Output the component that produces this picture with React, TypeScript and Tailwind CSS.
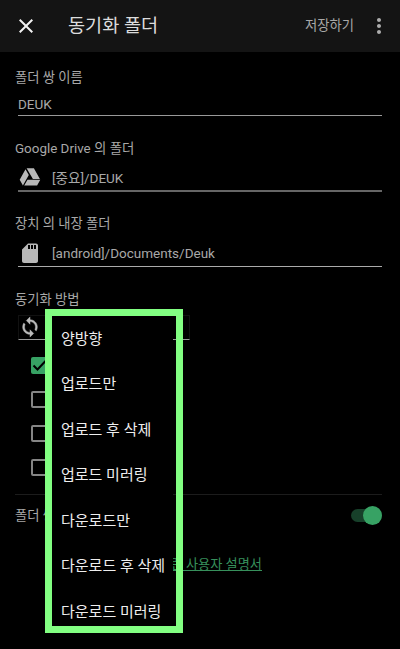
import React from 'react';

const menuItems = [
  '양방향',
  '업로드만',
  '업로드 후 삭제',
  '업로드 미러링',
  '다운로드만',
  '다운로드 후 삭제',
  '다운로드 미러링',
];

const CloseIcon = () => (
  <svg viewBox="0 0 24 24" className="size-[24px] fill-[#f2f2f2]">
    <path d="M19 6.41 17.59 5 12 10.59 6.41 5 5 6.41 10.59 12 5 17.59 6.41 19 12 13.41 17.59 19 19 17.59 13.41 12z" />
  </svg>
);

const MoreIcon = () => (
  <svg viewBox="0 0 24 24" className="size-[24px] fill-[#adadad]">
    <path d="M12 8c1.1 0 2-.9 2-2s-.9-2-2-2-2 .9-2 2 .9 2 2 2m0 2c-1.1 0-2 .9-2 2s.9 2 2 2 2-.9 2-2-.9-2-2-2m0 6c-1.1 0-2 .9-2 2s.9 2 2 2 2-.9 2-2-.9-2-2-2" />
  </svg>
);

const DriveIcon = () => (
  <svg viewBox="0 0 24 24" className="size-[24px] fill-[#b8b8b8]">
    <path d="M7.500 4.200 1.700 14.700l3.200 5.800 5.900-10.600zM9.500 14.800 6.200 20.500h12.900l3.200-5.700zM21.900 14 15.900 3.200H8.600L14.900 14z" />
  </svg>
);

const SdCardIcon = () => (
  <svg viewBox="0 0 24 24" className="size-[24px] fill-[#b8b8b8]">
    <path d="M18 2.500h-8L4.020 8.500 4 20c0 1.100.9 2 2 2h12c1.100 0 2-.9 2-2V4.500c0-1.100-.9-2-2-2m-6 5.500h-2V4h2zm3 0h-2V4h2zm3 0h-2V4h2z" />
  </svg>
);

const SyncIcon = () => (
  <svg viewBox="0 0 24 24" className="size-[22px] fill-[#bcbcbc] stroke-[#bcbcbc] stroke-[0.5]">
    <path d="M12 4V1L8 5l4 4V6c3.310 0 6 2.690 6 6 0 1.010-.25 1.970-.7 2.800l1.460 1.460C19.540 15.030 20 13.570 20 12c0-4.420-3.580-8-8-8m0 14c-3.310 0-6-2.690-6-6 0-1.010.25-1.970.7-2.800L5.240 7.740C4.460 8.970 4 10.430 4 12c0 4.420 3.580 8 8 8v3l4-4-4-4z" />
  </svg>
);

function Checkbox({ checked = false }: { checked?: boolean }) {
  return checked ? (
    <div className="flex size-[17px] items-center justify-center rounded-[2px] bg-[#37a264]">
      <svg viewBox="0 0 17 17" className="size-[17px] fill-none stroke-black stroke-2">
        <path d="m2.500 8.500 4 4 8-8.500" />
      </svg>
    </div>
  ) : (
    <div className="size-[17px] rounded-[2px] border-2 border-[#858585]" />
  );
}

function Label({ children }: { children: React.ReactNode }) {
  return <div className="h-5 whitespace-nowrap leading-[21px]">{children}</div>;
}

export default function App() {
  return (
    <div className="relative h-[649px] w-[400px] overflow-hidden bg-black font-[Roboto,'Noto_Sans_CJK_KR',sans-serif] text-[13.3px] text-[#a8a8a8]">
      <header className="flex h-[52px] items-center bg-[#141414] pl-[14px] pr-[9px]">
        <CloseIcon />
        <h1 className="ml-[30px] text-[18.600px] leading-6 text-[#dcdcdc]">동기화 폴더</h1>
        <span className="ml-auto mr-[13px] leading-5">저장하기</span>
        <MoreIcon />
      </header>

      <main className="flex flex-col pl-[15px] pr-[18px] pt-[15px]">
        <Label>폴더 쌍 이름</Label>
        <div className="ml-[3px] flex h-[29px] items-center border-b border-[#999] pt-[7px] text-[13.500px]">DEUK</div>

        <div className="mt-[22px] text-[13.400px]"><Label>Google Drive 의 폴더</Label></div>
        <div className="ml-[3px] flex h-[34px] items-center gap-[10px] border-b-2 border-[#666] pt-[6px] text-[13.500px]">
          <DriveIcon />
          <span className="pt-[2px]">[중요]/DEUK</span>
        </div>

        <div className="mt-[21px]"><Label>장치 의 내장 폴더</Label></div>
        <div className="ml-[3px] flex h-[34px] items-center gap-[10px] border-b border-[#aaa] pt-[6px] text-[13.500px]">
          <SdCardIcon />
          <span className="pt-px">[android]/Documents/Deuk</span>
        </div>

        <div className="mt-[22px]"><Label>동기화 방법</Label></div>
        <div className="ml-[3px] mt-[6px] flex h-[25px] w-[172px] items-center border border-[#111] border-b-[#999] pb-px">
          <SyncIcon />
        </div>

        <div className="ml-[16px] mt-[17px] flex flex-col gap-[17px]">
          <Checkbox checked />
          <Checkbox />
          <Checkbox />
          <Checkbox />
        </div>

        <div className="mt-[18px] flex h-[42px] items-center justify-between border-t border-[#1c1c1c]">
          <span>폴더 쌍</span>
          <div className="flex h-[13px] w-[31px] items-center justify-end rounded-full bg-[#17402a]">
            <div className="size-[19px] shrink-0 rounded-full bg-[#37a264]" />
          </div>
        </div>
        <a className="mr-[120px] mt-[19px] self-end whitespace-nowrap text-[13.200px] leading-5 text-[#37905c] underline">관련 사용자 설명서</a>
      </main>

      <div className="absolute left-[45px] top-[309px] h-[324px] w-[138px] border-[7px] border-[#82ff82]">
        <ul className="flex h-full w-[121px] flex-col bg-black pl-[9px] text-[15px] text-[#eee]">
          {menuItems.map((item) => (
            <li key={item} className="flex h-[45.500px] shrink-0 items-center whitespace-nowrap">{item}</li>
          ))}
        </ul>
      </div>
    </div>
  );
}
